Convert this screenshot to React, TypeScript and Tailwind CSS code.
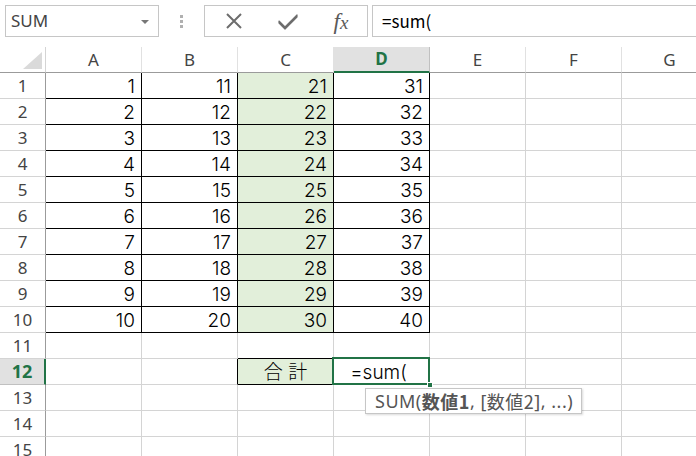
import React from 'react';

const cols = ['A', 'B', 'C', 'D', 'E', 'F', 'G'];
const rows = Array.from({ length: 15 }, (_, i) => i + 1);

const gridFont = { fontFamily: '"Noto Sans", "Open Sans", sans-serif' };
const cellFont = { fontFamily: 'Inter, "Noto Sans CJK JP", sans-serif' };

function cellValue(r: number, c: number): string {
  if (r <= 10 && c < 4) return String(r + c * 10);
  if (r === 12 && c === 2) return '合 計';
  if (r === 12 && c === 3) return '=sum(';
  return '';
}

function cellClass(r: number, c: number): string {
  const inTable = r <= 10 && c < 4;
  const isTotal = r === 12 && (c === 2 || c === 3);
  let cls = 'h-[26px] w-[96px] shrink-0 border-r border-b flex items-end leading-[22px] text-[19px] font-light text-black ';
  const blackRight = inTable || isTotal || (r === 12 && c === 1);
  const blackBottom = inTable || isTotal || (r === 11 && (c === 2 || c === 3));
  cls += blackRight ? 'border-r-black ' : 'border-r-[#d4d4d4] ';
  cls += blackBottom ? 'border-b-black ' : 'border-b-[#d4d4d4] ';
  if ((c === 2 && r <= 10) || (r === 12 && c === 2)) cls += 'bg-[#e2efda] ';
  if (r === 12 && c === 2) cls += 'justify-center ';
  else if (r === 12 && c === 3) cls += 'justify-center pr-[6px] ';
  else cls += 'justify-end pr-[6px] ';
  return cls;
}

export default function App() {
  return (
    <div className="w-[696px] h-[456px] bg-white overflow-hidden relative" style={gridFont}>
      {/* formula bar */}
      <div className="h-[47px] flex items-start pt-[5px] pl-[5px]">
        <div className="w-[154px] h-[32px] border border-[#c6c6c6] flex items-center justify-between pl-[5px] pr-[9px]">
          <span className="text-[17px] text-[#444]">SUM</span>
          <span className="w-0 h-0 border-l-[4px] border-r-[4px] border-t-[4px] border-l-transparent border-r-transparent border-t-[#777] mt-[1px]" />
        </div>
        <div className="w-[45px] h-[32px] flex flex-col items-center justify-center gap-[2px]">
          <span className="w-[3px] h-[3px] bg-[#b0b0b0]" />
          <span className="w-[3px] h-[3px] bg-[#b0b0b0]" />
          <span className="w-[3px] h-[3px] bg-[#b0b0b0]" />
        </div>
        <div className="w-[164px] h-[32px] border border-[#c6c6c6] flex items-center">
          <div className="w-[56px] flex justify-center pl-[2px]">
            <svg width="18" height="18" viewBox="0 0 18 18">
              <path d="M2 2 L16 16 M16 2 L2 16" stroke="#6d6d6d" strokeWidth="2" />
            </svg>
          </div>
          <div className="w-[54px] flex justify-center">
            <svg width="22" height="18" viewBox="0 0 22 18">
              <path d="M2 9 L8 15 L20 3 L20 5 L8 17 L2 11 Z" fill="#6d6d6d" stroke="#6d6d6d" strokeWidth="1.2" strokeLinejoin="round" />
            </svg>
          </div>
          <div className="flex-1 flex justify-center">
            <span className="text-[23px] italic text-[#5a5a5a] leading-none" style={{ fontFamily: '"Liberation Serif", serif' }}>
              f<span className="text-[19px]">x</span>
            </span>
          </div>
        </div>
        <div className="ml-[4px] flex-1 h-[32px] border border-[#c6c6c6] border-r-0 flex items-center pl-[9px]">
          <span className="text-[17px] text-black" style={{ fontFamily: '"Noto Sans CJK JP", sans-serif' }}>=sum(</span>
        </div>
      </div>

      {/* column headers */}
      <div className="flex h-[26px]">
        <div className="w-[46px] shrink-0 h-[26px] border-r border-b border-r-[#d4d4d4] border-b-[#9b9b9b] relative">
          <svg className="absolute right-[3px] bottom-[3px]" width="19" height="17" viewBox="0 0 19 17">
            <path d="M19 0 L19 17 L0 17 Z" fill="#dadada" />
          </svg>
        </div>
        {cols.map((c) => (
          <div
            key={c}
            className={
              c === 'D'
                ? 'w-[96px] shrink-0 h-[26px] bg-[#e1e1e1] border-r border-r-[#c0c0c0] border-b-2 border-b-[#217346] flex items-center justify-center text-[17px] font-bold text-[#217346]'
                : 'w-[96px] shrink-0 h-[26px] border-r border-r-[#e1e1e1] border-b border-b-[#9b9b9b] flex items-center justify-center text-[17px] text-[#444]'
            }
          >
            {c}
          </div>
        ))}
      </div>

      {/* rows */}
      {rows.map((r) => (
        <div key={r} className="flex h-[26px]">
          <div
            className={
              r === 12
                ? 'w-[46px] shrink-0 h-[26px] bg-[#e1e1e1] border-r-2 border-r-[#217346] border-b border-b-[#c0c0c0] flex items-center justify-center text-[18px] font-bold text-[#217346]'
                : 'w-[46px] shrink-0 h-[26px] border-r border-r-[#9b9b9b] border-b border-b-[#d4d4d4] flex items-center justify-center text-[17px] text-[#444]'
            }
          >
            {r}
          </div>
          {cols.map((c, ci) => (
            <div key={c} className={cellClass(r, ci)} style={cellFont}>
              {cellValue(r, ci)}
            </div>
          ))}
        </div>
      ))}

      {/* selection around D12 */}
      <div className="absolute left-[332px] top-[357px] w-[98px] h-[28px] border-2 border-[#217346] pointer-events-none" />
      <div className="absolute left-[427px] top-[382px] w-[6px] h-[6px] bg-[#217346] border border-white" />

      {/* function tooltip */}
      <div className="absolute left-[365px] top-[388px] h-[26px] pl-[9px] pr-[8px] bg-white border border-[#c6c6c6] shadow-[1px_1px_2px_rgba(0,0,0,0.15)] flex items-center text-[18px] tracking-[0.5px] text-[#555] whitespace-nowrap" style={{ fontFamily: '"Noto Sans", "Noto Sans CJK JP", sans-serif' }}>
        SUM(<span className="font-bold" style={{ fontFamily: '"Noto Sans CJK JP", sans-serif' }}>数値1</span>, [<span style={{ fontFamily: '"Noto Sans CJK JP", sans-serif' }}>数値2</span>], ...)
      </div>
    </div>
  );
}
